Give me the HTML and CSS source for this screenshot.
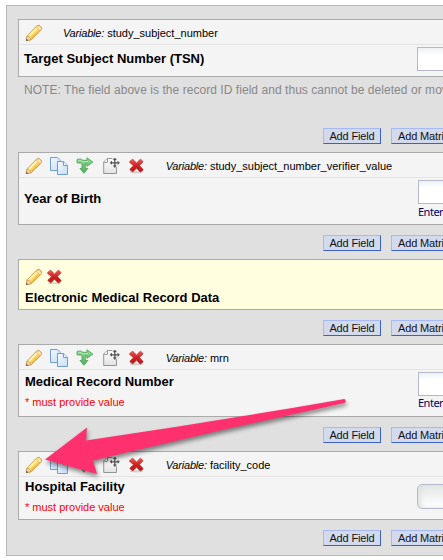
FILE: index.html
```html
<!DOCTYPE html>
<html lang="en">
<head>
<meta charset="utf-8">
<title>Online Designer</title>
<link rel="stylesheet" href="styles.css">
</head>
<body>
<svg class="defs" width="0" height="0">
  <defs>
    <linearGradient id="leaf" x1="0" y1="0" x2="0" y2="1"><stop offset="0" stop-color="#9cda98"/><stop offset="1" stop-color="#4db058"/></linearGradient>
    <linearGradient id="sheet" x1="0" y1="0" x2="1" y2="1"><stop offset="0" stop-color="#f4f9ff"/><stop offset="1" stop-color="#c5ddf7"/></linearGradient>
    <linearGradient id="paper" x1="0" y1="0" x2="0" y2="1"><stop offset="0" stop-color="#fff"/><stop offset="1" stop-color="#e2e2e2"/></linearGradient>
    <linearGradient id="cross" x1="0" y1="0" x2="0" y2="1"><stop offset="0" stop-color="#e8605c"/><stop offset=".5" stop-color="#d01f20"/><stop offset="1" stop-color="#b81a1c"/></linearGradient>
    <symbol id="pencil" viewBox="0 0 18 18">
      <path d="M1.3 16.5 2.2 11.8 11.9 1.8Q13.3.7 14.8 1.8L16.3 3.3Q17.2 4.7 16.1 6.1L6.2 15.8Z" fill="#fbd75f" stroke="#cf9440" stroke-width=".9"/>
      <path d="m4 12 8.3-8.4" stroke="#fff3b4" stroke-width="2"/>
      <path d="m6.1 14.3 8.3-8.2" stroke="#f3bd48" stroke-width="1.3"/>
      <path d="m11.4 3.2 3.4 3.5 1.3-1.3q.6-1-.2-1.8l-1.5-1.4q-1-.7-1.9 0Z" fill="#ffe6bb" stroke="#dca660" stroke-width=".6"/>
      <path d="m1.3 16.5.9-4.5q2.8.7 3.7 3.7Z" fill="#f9e2bf" stroke="#bf8a4a" stroke-width=".7"/>
      <path d="m1 16.9.5-2.2 1.7 1.6Z" fill="#6b4a2c"/>
    </symbol>
    <symbol id="copy" viewBox="0 0 18 18">
      <path d="M.5.5h6.7l3.3 3.3v9.7H.5Z" fill="url(#sheet)" stroke="#6d9cd9"/>
      <path d="M7.5 4.5h6.2l3.8 3.8v9.2h-10Z" fill="url(#sheet)" stroke="#6d9cd9"/>
      <path d="M13.5 4.8v3.7h3.8" fill="#fff" stroke="#6d9cd9"/>
    </symbol>
    <symbol id="branch" viewBox="0 0 18 18">
      <path d="M1.3 2.2h4.2l1.2 1.1H11V.8l5.8 4.2L11 9.3V6.9H9.3v4.5h2.5L7.9 16.2 4 11.4h2V7.2L4.5 6H1.3Q.5 4.1 1.3 2.2Z" fill="url(#leaf)" stroke="#4aa35b" stroke-width=".9"/>
      <path d="M2.2 3.3h3l1.2 1.2H12" fill="none" stroke="#c2ebba" stroke-width=".8"/>
    </symbol>
    <symbol id="move" viewBox="0 0 18 18">
      <path d="M5.2 1.5h9.3v15H1.7V5Z" fill="url(#paper)" stroke="#959595"/>
      <path d="M5.5 1.7v3.7H1.8" fill="#fff" stroke="#959595"/>
      <circle cx="12.8" cy="5.8" r="5" fill="#f4f4f4" opacity=".85"/>
      <path d="M12.8 1.8v8M8.8 5.8h8" stroke="#555" stroke-width="1.3"/>
      <path d="m12.8.7 2 2.3h-4ZM12.8 10.9l2-2.3h-4ZM7.7 5.8l2.3-2v4ZM17.9 5.8l-2.3-2v4Z" fill="#555"/>
    </symbol>
    <symbol id="delete" viewBox="0 0 18 18">
      <ellipse cx="8.5" cy="15.3" rx="6.5" ry="1" fill="#aaa" opacity=".5"/>
      <path transform="translate(-.3 .2) scale(.98)" d="m2 4.4 2.5-2.1q.6-.4 1 .1L9 5.8l3.5-3.4q.6-.5 1.1 0l1.8 1.8q.5.5 0 1L12 8.4l3.6 4q.4.5-.1 1l-2.1 1.5q-.6.4-1-.1L9 11.4l-3.3 3.3q-.5.5-1.1 0L2.5 13q-.5-.5 0-1.1L5.9 8.6 2 5.4q-.5-.5 0-1Z" fill="url(#cross)" stroke="#b92b2b" stroke-width=".6"/>
    </symbol>
  </defs>
</svg>

<main class="designer">
  <section class="card record-card">
    <div class="toolbar"><svg class="icon"><use href="#pencil"/></svg><p class="variable"><i>Variable:</i> study_subject_number</p></div>
    <div class="field"><h2>Target Subject Number (TSN)</h2><div class="entry"><div class="textbox"></div></div></div>
  </section>
  <p class="note">NOTE: The field above is the record ID field and thus cannot be deleted or moved.</p>
  <div class="actions"><button>Add Field</button><button>Add Matrix of Fields</button></div>

  <section class="card birth-card">
    <div class="toolbar"><svg class="icon"><use href="#pencil"/></svg><svg class="icon copy"><use href="#copy"/></svg><svg class="icon"><use href="#branch"/></svg><svg class="icon"><use href="#move"/></svg><svg class="icon"><use href="#delete"/></svg><p class="variable"><i>Variable:</i> study_subject_number_verifier_value</p></div>
    <div class="field"><h2>Year of Birth</h2><div class="entry"><div class="textbox"></div><small>Enter</small></div></div>
  </section>
  <div class="actions"><button>Add Field</button><button>Add Matrix of Fields</button></div>

  <section class="card heading-card">
    <div class="heading-tools"><svg class="icon"><use href="#pencil"/></svg><svg class="icon"><use href="#delete"/></svg></div>
    <h2>Electronic Medical Record Data</h2>
  </section>
  <div class="actions"><button>Add Field</button><button>Add Matrix of Fields</button></div>

  <section class="card mrn-card">
    <div class="toolbar"><svg class="icon"><use href="#pencil"/></svg><svg class="icon copy"><use href="#copy"/></svg><svg class="icon"><use href="#branch"/></svg><svg class="icon"><use href="#move"/></svg><svg class="icon"><use href="#delete"/></svg><p class="variable"><i>Variable:</i> mrn</p></div>
    <div class="field"><div><h2>Medical Record Number</h2><p class="required">* must provide value</p></div><div class="entry"><div class="textbox"></div><small>Enter</small></div></div>
  </section>
  <div class="actions"><button>Add Field</button><button>Add Matrix of Fields</button></div>

  <section class="card facility-card">
    <div class="toolbar"><svg class="icon"><use href="#pencil"/></svg><svg class="icon copy"><use href="#copy"/></svg><svg class="icon"><use href="#branch"/></svg><svg class="icon"><use href="#move"/></svg><svg class="icon"><use href="#delete"/></svg><p class="variable"><i>Variable:</i> facility_code</p></div>
    <div class="field"><div><h2>Hospital Facility</h2><p class="required">* must provide value</p></div><div class="entry"><div class="dropdown"></div></div></div>
  </section>
  <div class="actions"><button>Add Field</button><button>Add Matrix of Fields</button></div>
</main>

<svg class="pointer" width="443" height="560" viewBox="0 0 443 560">
  <path d="M45 459.5 87 427.5 86 440.5Q215 421.5 343 399.2A2 2 0 0 1 344.3 403L222 430 93 460.5 97 474Z" fill="#ff306e"/>
</svg>
</body>
</html>
```

FILE: styles.css
```css
* { box-sizing: border-box; }
body {
  margin: 0;
  width: 443px;
  height: 560px;
  overflow: hidden;
  position: relative;
  background: #fff;
  color: #000;
  font-family: "Liberation Sans", Arial, sans-serif;
}
h2, p { margin: 0; white-space: nowrap; }
.defs { position: absolute; }

.designer {
  width: 700px;
  height: 551px;
  margin: 5px 0 0 6px;
  padding: 13px 0 0 11px;
  border: 1px solid #b9b9b9;
  background: #e0e0e0;
}
.card {
  width: 660px;
  border: 1px solid #aaa;
  background: #f4f4f4;
}
.record-card { height: 58px; }
.birth-card, .mrn-card { height: 73px; }
.facility-card { height: 69px; }
.heading-card {
  height: 51px;
  padding: 8px 0 0 6px;
  background: #ffffe0;
}

.toolbar {
  display: flex;
  align-items: center;
  gap: 7.7px;
  height: 25px;
  padding: 2px 0 0 6px;
  border-bottom: 1px solid #e3e3e3;
}
.icon { display: block; width: 18px; height: 18px; flex: none; }
.copy { margin: 0 .7px 0 -.7px; }
.variable {
  margin-left: 12.2px;
  font-size: 11px;
  line-height: 14px;
}
.variable i { letter-spacing: -.2px; }

.field {
  display: grid;
  grid-template-columns: 393px 1fr;
  padding: 2px 0 0 6px;
}
h2 { font-size: 13px; line-height: 16px; font-weight: bold; }
.record-card h2 { margin-left: -1px; padding-top: 4px; }
.birth-card h2 { margin-left: -1px; padding-top: 11px; }
.mrn-card h2 { padding-top: 2px; }
.record-card .field { grid-template-columns: 392px 1fr; }
.facility-card .field { grid-template-columns: 392px 1fr; }
.required {
  margin-top: 5px;
  color: #f00;
  font-size: 11px;
  line-height: 14px;
}
.textbox {
  width: 150px;
  height: 24px;
  border: 1px solid #b5b8c8;
  background: linear-gradient(#edf1f1, #fff 7px);
}
.entry small {
  display: block;
  color: #000066;
  font: 11px/15px "Noto Sans", sans-serif;
  letter-spacing: -.5px;
}
.mrn-card small { margin-top: -1px; }
.dropdown {
  width: 150px;
  height: 25px;
  margin-top: 5px;
  border: 1px solid #b5b8c8;
  border-radius: 5px;
  background: linear-gradient(#e3e5e5, #fff);
  box-shadow: inset 3px 0 4px #e0e2e2;
}
.heading-tools { display: flex; gap: 3px; margin-bottom: 4px; }

.note {
  height: 41px;
  padding: 5px 0 0 6px;
  color: #888;
  font-size: 12px;
  line-height: 16px;
  letter-spacing: .05px;
}
.actions {
  display: flex;
  gap: 10px;
  padding: 10px 0 8px 305px;
}
button {
  width: 58px;
  height: 16px;
  padding: 0;
  border: 1px solid;
  border-color: #a6b8f5 #3d62bd #3d62bd #a6b8f5;
  background: #d3daee;
  color: #111;
  font: 11px/14px "Liberation Sans", Arial, sans-serif;
  letter-spacing: -.15px;
  white-space: nowrap;
}
button + button {
  width: 120px;
  padding-left: 6px;
  text-align: left;
}

.pointer {
  position: absolute;
  top: 0;
  left: 0;
  filter: drop-shadow(1px 3px 2px rgba(0, 0, 0, .45));
}
```
